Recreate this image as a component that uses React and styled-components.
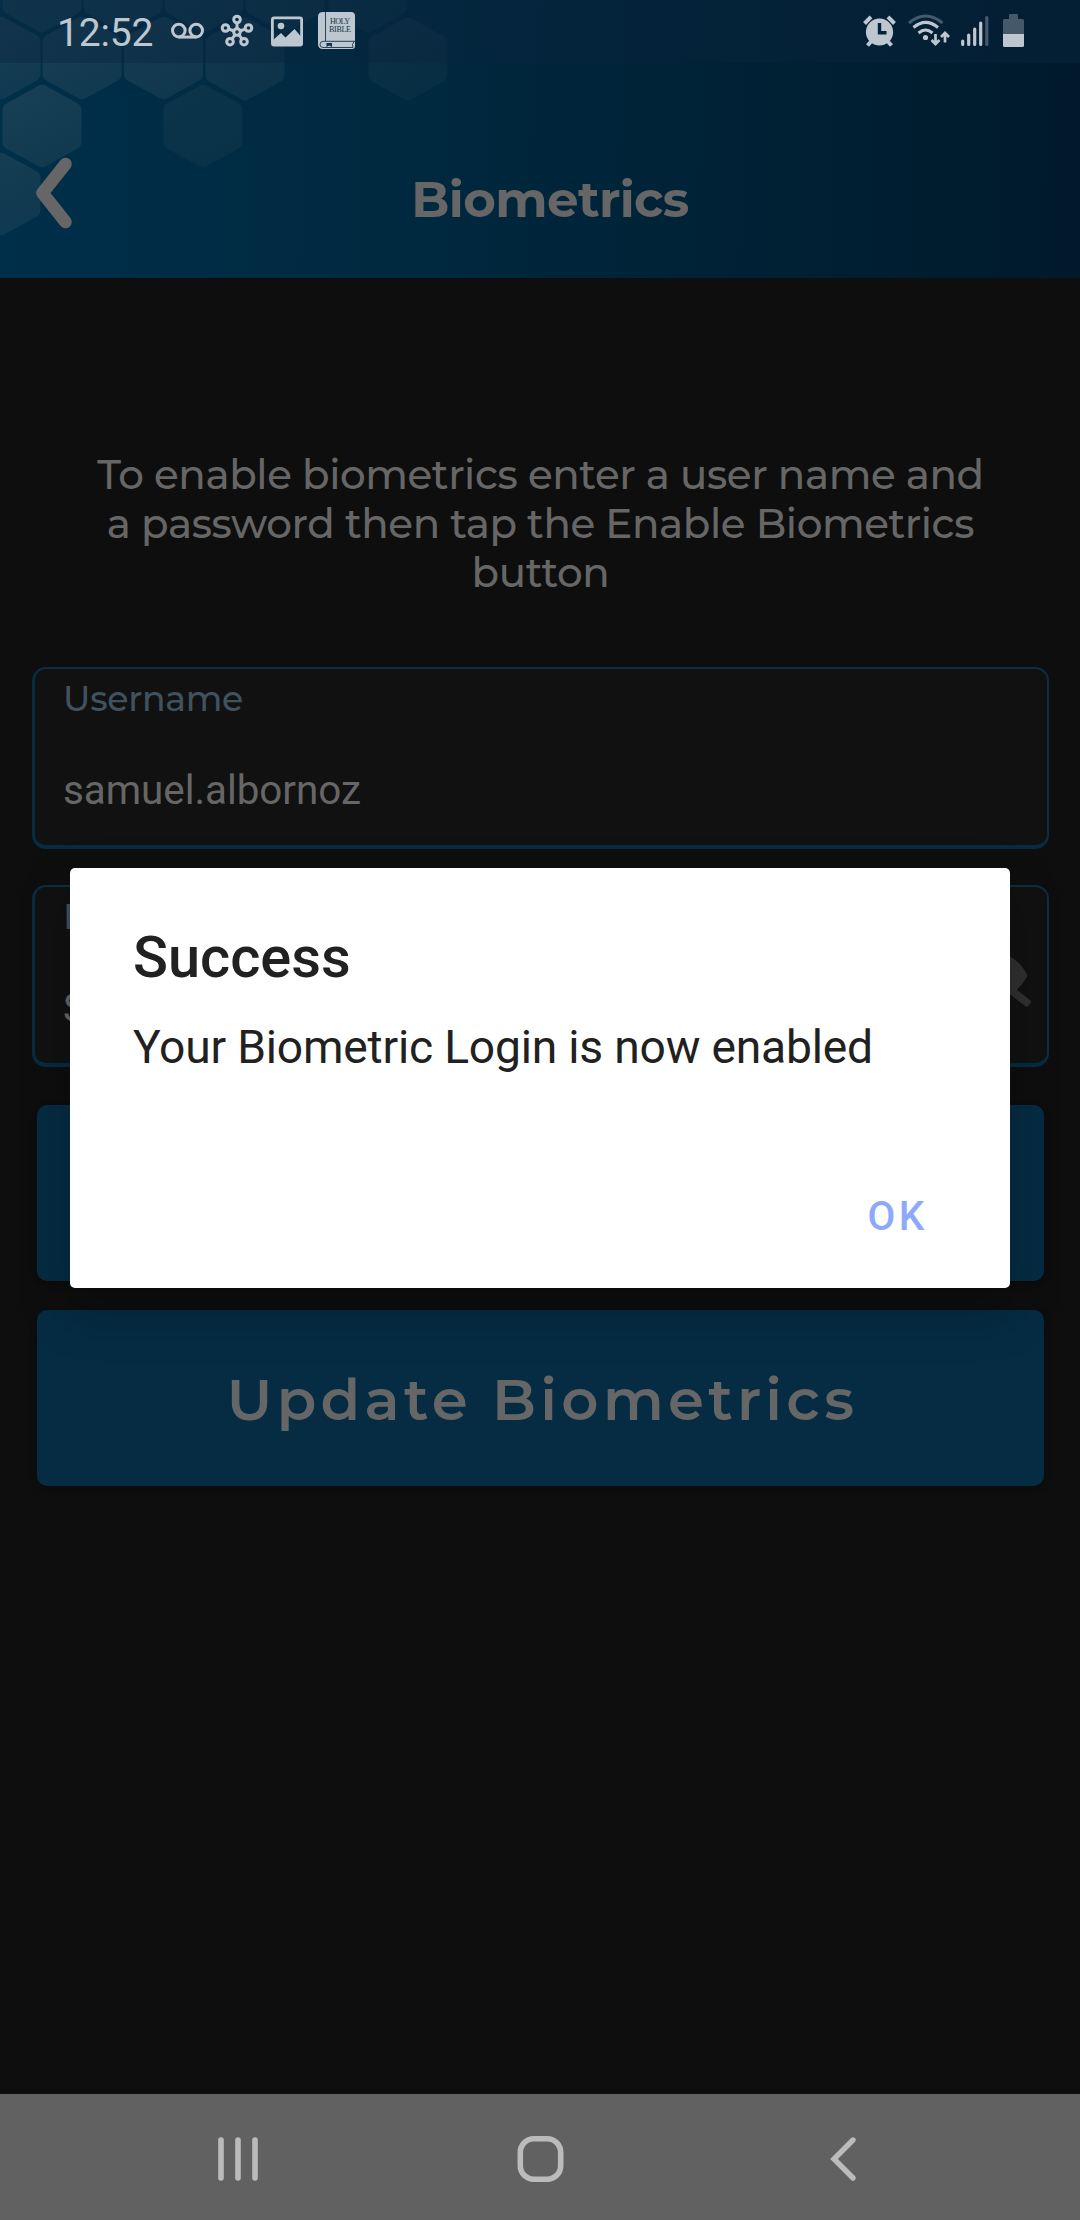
import React from "react";
import styled, { createGlobalStyle } from "styled-components";
import { FaEyeSlash } from "react-icons/fa";

const GlobalStyle = createGlobalStyle`
  * { box-sizing: border-box; }
  body { margin: 0; background: #0e0e0e; }
  button { border: 0; padding: 0; background: none; font: inherit; color: inherit; }
`;

const heading = `"Montserrat", "Inter", "Open Sans", sans-serif`;
const system = `"Roboto", "Noto Sans", sans-serif`;

const Screen = styled.div`
  position: relative;
  display: flex;
  flex-direction: column;
  width: 1080px;
  height: 2220px;
  overflow: hidden;
  background: #0e0e0e;
  color: #666;
  font-family: ${system};
`;

const Header = styled.header`
  position: relative;
  flex: none;
  height: 278px;
  background: linear-gradient(91deg, #002f4a 0%, #002940 35%, #002236 65%, #001a2c 100%);
`;

const Honeycomb = styled.svg`
  position: absolute;
  inset: 0;
  width: 460px;
  height: 278px;
`;

const StatusBar = styled.div`
  position: relative;
  display: flex;
  align-items: center;
  justify-content: space-between;
  height: 63px;
  padding: 0 56px 0 57px;
  background: rgba(10, 38, 62, 0.38);
  color: #bec7cf;
`;

const StatusGroup = styled.div`
  display: flex;
  align-items: center;
  height: 63px;
`;

const Clock = styled.span`
  width: 114px;
  font-size: 39px;
  line-height: 63px;
  letter-spacing: -0.2px;
  padding-top: 3px;
`;

const TitleBar = styled.div`
  position: relative;
  display: grid;
  grid-template-columns: 120px 1fr 120px;
  align-items: center;
  height: 215px;
`;

const BackButton = styled.button`
  display: flex;
  padding-left: 34px;
  margin-top: 45px;
  height: 76px;
`;

const Title = styled.h1`
  margin: 58px 0 0 20px;
  text-align: center;
  font: 700 49.9px/60px ${heading};
  letter-spacing: -0.65px;
`;

const Form = styled.main`
  flex: 1;
  display: flex;
  flex-direction: column;
  padding: 172px 31px 0 32px;
`;

const Hint = styled.p`
  margin: 0 0 58px;
  height: 159px;
  text-align: center;
  font: 500 40.4px/49px ${heading};
  letter-spacing: -0.4px;
  white-space: pre-line;
`;

const Field = styled.label`
  display: flex;
  align-items: stretch;
  justify-content: space-between;
  height: 182px;
  margin-bottom: 36px;
  padding: 0 16px 0 28px;
  border: solid #052c42;
  border-width: 2px 2px 4px 3px;
  border-top-color: #0c2e3f;
  border-right-color: #0c2e3f;
  border-radius: 14px;
  background: #111;
`;

const FieldText = styled.span`
  display: flex;
  flex-direction: column;
`;

const FieldLabel = styled.span`
  margin-top: 9px;
  font: 500 34.65px/42px ${heading};
  letter-spacing: -0.25px;
  color: #41525f;
`;

const FieldValue = styled.span`
  margin: 46px 0 0;
  font-size: 40.4px;
  line-height: 50px;
  letter-spacing: -0.05px;
`;

const Reveal = styled.span`
  display: flex;
  align-items: flex-start;
  padding-top: 57px;
  color: #303030;
`;

const EyeOff = styled(FaEyeSlash)`
  width: 78px;
  height: 63px;
`;

const Actions = styled.div`
  display: flex;
  flex-direction: column;
  gap: 29px;
  margin: 2px 5px 0;
`;

const Action = styled.button`
  height: 176px;
  padding: 1px 0 0 4px;
  border-radius: 10px;
  background: #052c43;
  box-shadow: 0 2px 6px rgba(0, 0, 0, 0.3);
  font: 600 57.75px/70px ${heading};
  letter-spacing: 4.3px;
  text-align: center;
`;

const Scrim = styled.div`
  position: absolute;
  inset: 0 0 64px;
  display: flex;
  align-items: center;
  justify-content: center;
`;

const Dialog = styled.section`
  display: flex;
  flex-direction: column;
  width: 940px;
  height: 420px;
  padding: 54px 63px;
  border-radius: 5px;
  background: #fff;
  color: #212121;
  box-shadow: 0 22px 50px rgba(0, 0, 0, 0.25);
`;

const DialogTitle = styled.h2`
  margin: 0;
  font: 500 57.75px/70px ${system};
`;

const DialogMessage = styled.p`
  margin: 28px 0 0;
  font-size: 46.2px;
  line-height: 54px;
  letter-spacing: -0.2px;
  white-space: nowrap;
`;

const DialogButton = styled.button`
  align-self: flex-end;
  margin: 119px 19px 0 0;
  font: 500 40.4px/48px ${system};
  letter-spacing: 3.6px;
  color: #8caaf9;
`;

const NavBar = styled.nav`
  flex: none;
  display: grid;
  grid-template-columns: repeat(3, 302px);
  justify-content: center;
  place-items: center;
  height: 126px;
  padding-top: 3px;
  background: #616161;
`;

const Icon = styled.svg`
  display: block;
  flex: none;
  overflow: visible;
  margin-left: ${(p) => p.$gap || 0}px;
`;

const HEX = "M-4 -40Q0 -42.5 4 -40L35 -23Q39.5 -20.5 39.5 -16V16Q39.5 20.5 35 23L4 40Q0 42.5 -4 40L-35 23Q-39.5 20.5 -39.5 16V-16Q-39.5 -20.5 -35 -23Z";
const cells = [
  [-39, -9, 0.12], [42, -9, 0.12], [123, -9, 0.1], [204, -9, 0.09], [285, -9, 0.08], [368, -9, 0.06],
  [1, 58, 0.12], [82, 58, 0.12], [163.5, 58, 0.11], [245, 59, 0.09], [408, 59, 0.055],
  [42, 126, 0.12], [203, 126, 0.06], [1, 194, 0.11],
];

function Cells() {
  return (
    <Honeycomb viewBox="0 0 460 278">
      <defs>
        <linearGradient id="cell" x1="0" y1="0" x2="0.4" y2="1">
          <stop offset="0" stopColor="#c8b8a8" />
          <stop offset="1" stopColor="#c8b8a8" stopOpacity="0.7" />
        </linearGradient>
      </defs>
      {cells.map(([x, y, o]) => (
        <path key={`${x},${y}`} d={HEX} transform={`translate(${x} ${y})`} fill="url(#cell)" opacity={o} />
      ))}
    </Honeycomb>
  );
}

const hubNodes = [[16, 4.5], [27.5, 13], [23, 26.7], [9, 26.7], [4.5, 13]];

function StatusLeft() {
  return (
    <StatusGroup>
      <Clock>12:52</Clock>
      <Icon width="33" height="16" viewBox="0 0 33 16" fill="none" stroke="currentColor" strokeWidth="3">
        <circle cx="7.8" cy="6.6" r="6.3" />
        <circle cx="25.2" cy="6.6" r="6.3" />
        <path d="M7.8 13.1H25.2" />
      </Icon>
      <Icon $gap={17} width="32" height="31" viewBox="0 0 32 31" fill="none" stroke="currentColor" strokeWidth="3">
        <circle cx="16" cy="16" r="3.3" />
        {hubNodes.map(([x, y]) => (
          <g key={x + y * 50}>
            <circle cx={x} cy={y - 1} r="3.3" />
            <path d={`M${16 + (x - 16) * 0.32} ${16 + (y - 17) * 0.32}L${16 + (x - 16) * 0.7} ${16 + (y - 17) * 0.7}`} />
          </g>
        ))}
      </Icon>
      <Icon $gap={18} width="32" height="30" viewBox="0 0 32 30">
        <rect x="1.4" y="0.9" width="29.2" height="27.2" rx="1.6" fill="none" stroke="currentColor" strokeWidth="2.8" />
        <circle cx="10" cy="9" r="3.3" fill="currentColor" />
        <path d="M2 23L10 16L14.5 20.5L23.5 12L30 19.5V28H2Z" fill="currentColor" />
      </Icon>
      <Icon $gap={15} width="37" height="37" viewBox="0 0 37 37">
        <path d="M5 -1H33Q37 -1 37 3V33Q37 36 34 36H5Q0 36 0 31V4Q0 -1 5 -1Z" fill="currentColor" />
        <path d="M7.5 -1V28M37 28.3H5Q2 28.5 2 31.5Q2 34.3 5 34.5H35Q33.5 31.5 36 28.5" fill="none" stroke="#23445a" strokeWidth="1" />
        <path d="M8.5 30H14V34L11.2 32.5L8.5 34Z" fill="#12344b" />
        <g fill="#12344b" fontFamily="Liberation Serif, serif" fontSize="8" textAnchor="middle">
          <text x="22" y="10.5" textLength="20">HOLY</text>
          <text x="22" y="19" textLength="22">BIBLE</text>
        </g>
      </Icon>
    </StatusGroup>
  );
}

function StatusRight() {
  return (
    <StatusGroup>
      <Icon width="33" height="32" viewBox="0 0 33 32">
        <g stroke="currentColor" strokeWidth="4">
          <path d="M1.5 7.5L8 0.8M31.5 7.5L25 0.8" />
          <path d="M4.5 29.5L9 24.5M28.5 29.5L24 24.5" />
        </g>
        <circle cx="16.5" cy="16" r="13.6" fill="currentColor" />
        <path d="M16.5 7V16.8H23.5" fill="none" stroke="#04243a" strokeWidth="3.4" />
      </Icon>
      <Icon $gap={12} width="42" height="33" viewBox="0 0 42 33" fill="none" stroke="currentColor" strokeWidth="3">
        <path d="M1 8Q17.5 -6 34.5 8" opacity="0.35" />
        <path d="M5.5 12.5Q17.5 2.3 30 12.5" />
        <path d="M10.5 18Q17.5 12 24.5 18" />
        <circle cx="17.5" cy="22.5" r="2.6" fill="currentColor" stroke="none" />
        <path d="M27.5 19V28.5M23.5 25L27.5 29L31.5 25M37 27.5V18.5M33 22L37 18L41 22" strokeWidth="2.7" />
      </Icon>
      <Icon $gap={11} width="28" height="32" viewBox="0 0 28 32" fill="none" stroke="currentColor" strokeWidth="3.2" strokeLinecap="round">
        <path d="M1.7 25V28.5M7.7 19V28.5M13.7 13V28.5M19.7 7V28.5" />
        <path d="M25.8 1.5V28.5" opacity="0.35" />
      </Icon>
      <Icon $gap={14} width="21" height="33" viewBox="0 0 21 33" fill="currentColor">
        <path d="M6 0Q6 -1 7 -1H14Q15 -1 15 0V4H19.5Q21 4 21 5.5V19H0V5.5Q0 4 1.5 4H6Z" opacity="0.35" />
        <path d="M0 19H21V30.5Q21 32 19.5 32H1.5Q0 32 0 30.5Z" />
      </Icon>
    </StatusGroup>
  );
}

function InputField({ label, value, secret }) {
  return (
    <Field>
      <FieldText>
        <FieldLabel>{label}</FieldLabel>
        <FieldValue>{value}</FieldValue>
      </FieldText>
      {secret && <Reveal><EyeOff /></Reveal>}
    </Field>
  );
}

export default function App() {
  return (
    <>
      <GlobalStyle />
      <Screen>
        <Header>
          <Cells />
          <StatusBar>
            <StatusLeft />
            <StatusRight />
          </StatusBar>
          <TitleBar>
            <BackButton aria-label="Back">
              <Icon width="40" height="76" viewBox="0 0 40 76" fill="none" stroke="currentColor" strokeWidth="12.5" strokeLinecap="round" strokeLinejoin="round">
                <path d="M31.5 9L8.5 38L31.5 67" />
              </Icon>
            </BackButton>
            <Title>Biometrics</Title>
          </TitleBar>
        </Header>
        <Form>
          <Hint>{"To enable biometrics enter a user name and\na password then tap the Enable Biometrics\nbutton"}</Hint>
          <InputField label="Username" value="samuel.albornoz" />
          <InputField label="P" value="S" secret />
          <Actions>
            <Action aria-label="Enable Biometrics" />
            <Action>Update Biometrics</Action>
          </Actions>
        </Form>
        <NavBar>
          <Icon width="40" height="44" viewBox="0 0 40 44" fill="none" stroke="#bbb" strokeWidth="5.6" strokeLinecap="round">
            <path d="M3 3V41M20 3V41M37 3V41" />
          </Icon>
          <Icon width="46" height="46" viewBox="0 0 46 46" fill="none" stroke="#bbb" strokeWidth="5.6">
            <rect x="3.3" y="2.8" width="40.4" height="40.4" rx="13.5" />
          </Icon>
          <Icon width="26" height="44" viewBox="0 0 26 44" fill="none" stroke="#bbb" strokeWidth="5.4" strokeLinecap="round">
            <path d="M24 3L5 22L24 41" />
          </Icon>
        </NavBar>
        <Scrim>
          <Dialog role="dialog">
            <DialogTitle>Success</DialogTitle>
            <DialogMessage>Your Biometric Login is now enabled</DialogMessage>
            <DialogButton>OK</DialogButton>
          </Dialog>
        </Scrim>
      </Screen>
    </>
  );
}
